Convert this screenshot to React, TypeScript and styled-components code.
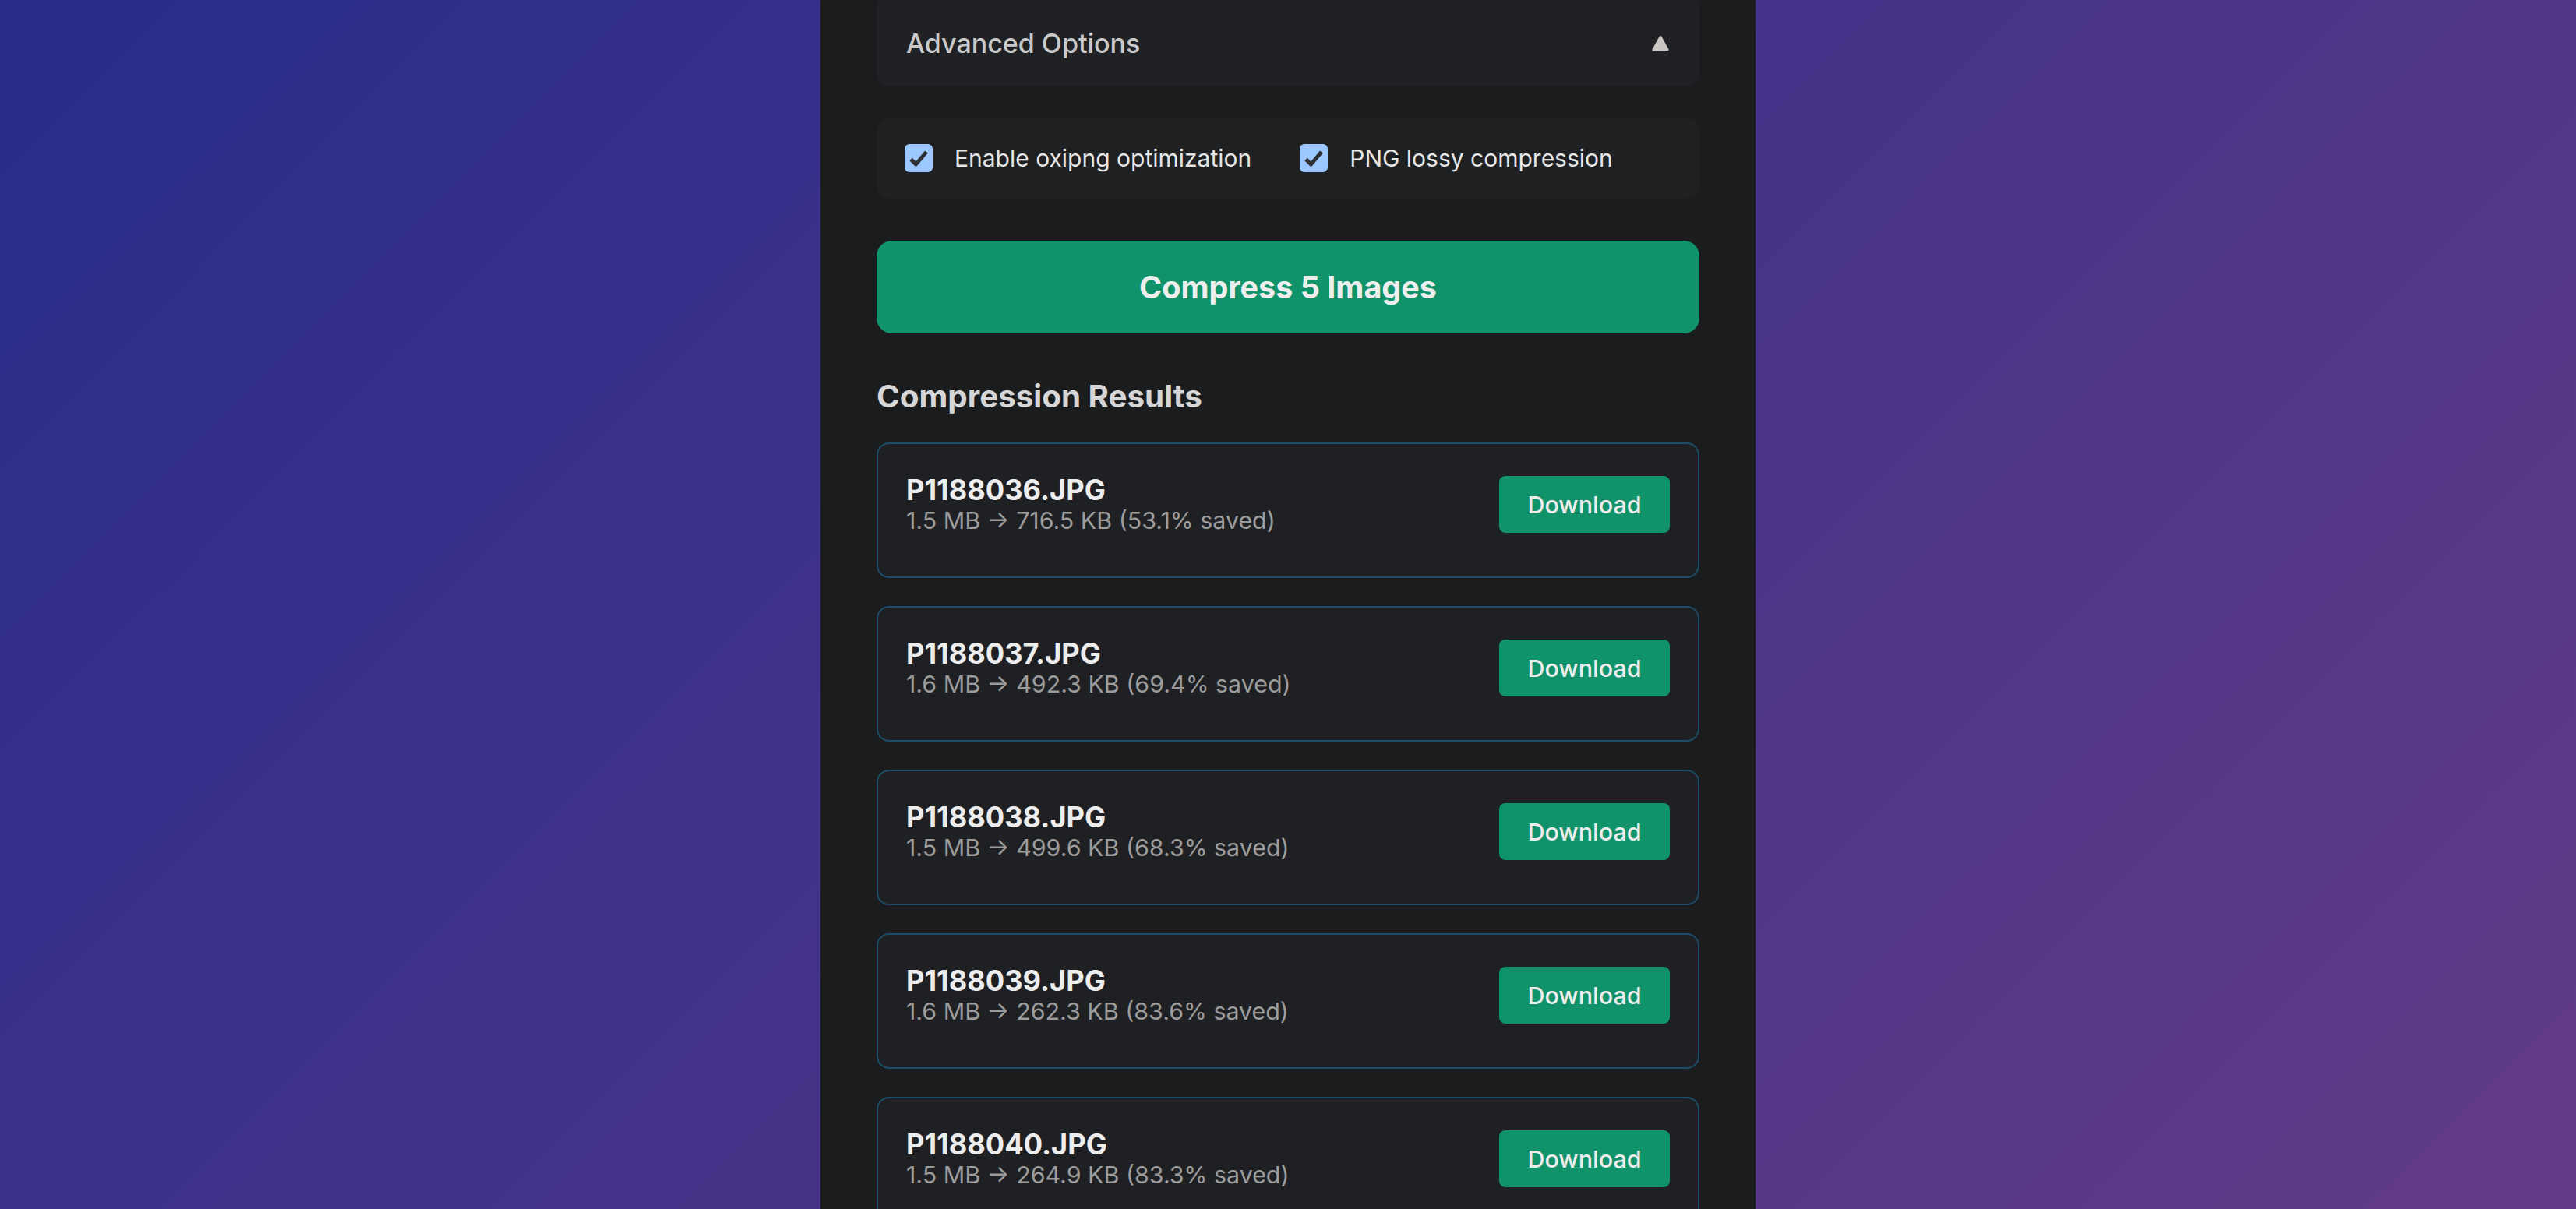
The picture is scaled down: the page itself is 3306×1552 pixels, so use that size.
import React from "react";
import styled, { createGlobalStyle } from "styled-components";

const GlobalStyle = createGlobalStyle`
  html, body {
    margin: 0;
    padding: 0;
  }
  body {
    background: linear-gradient(135deg, #282c8b 0%, #633b86 100%);
    min-height: 100vh;
    font-family: Inter, "Noto Sans", "Liberation Sans", sans-serif;
    overflow: hidden;
  }
`;

const Page = styled.div`
  display: flex;
  justify-content: center;
  min-height: 100vh;
`;

const Panel = styled.main`
  width: 1200px;
  box-sizing: border-box;
  min-height: 100vh;
  background: #1b1c1e;
  padding: 0 72px;
  display: flex;
  flex-direction: column;
`;

const AdvancedCard = styled.div`
  margin-top: -6px;
  height: 116px;
  box-sizing: border-box;
  background: #202124;
  border-radius: 16px;
  padding: 6px 38px 0;
  display: flex;
  align-items: center;
  justify-content: space-between;
`;

const AdvancedTitle = styled.span`
  font-size: 34px;
  font-weight: 500;
  color: #c9c9c9;
`;

const OptionsCard = styled.div`
  margin-top: 41px;
  height: 104px;
  box-sizing: border-box;
  background: #1f2022;
  border-radius: 16px;
  padding: 0 36px;
  display: flex;
  align-items: center;
  gap: 62px;
`;

const OptionLabel = styled.label`
  display: flex;
  align-items: center;
  gap: 28px;
  font-size: 30px;
  color: #e6e6e6;
`;

const CheckBox = styled.span`
  width: 36px;
  height: 36px;
  border-radius: 6px;
  background: #9cc8ff;
  display: flex;
  align-items: center;
  justify-content: center;
`;

const CompressButton = styled.button`
  margin-top: 54px;
  height: 119px;
  border: none;
  border-radius: 20px;
  background: #10936a;
  color: #eeeeee;
  font-family: inherit;
  font-size: 39.5px;
  font-weight: 700;
  cursor: pointer;
`;

const ResultsHeading = styled.h2`
  margin: 56px 0 35px;
  font-size: 40.3px;
  font-weight: 700;
  color: #d6d6d6;
`;

const ResultList = styled.div`
  display: flex;
  flex-direction: column;
  gap: 36px;
`;

const ResultCard = styled.div`
  border: 2px solid #1c4e69;
  border-radius: 16px;
  background: #1f2023;
  padding: 38px 36px 54px;
  display: flex;
  align-items: center;
  justify-content: space-between;
`;

const FileInfo = styled.div`
  display: flex;
  flex-direction: column;
`;

const FileName = styled.span`
  font-size: 36.2px;
  line-height: 42px;
  font-weight: 700;
  color: #ededed;
`;

const FileSizes = styled.span`
  font-size: 30.4px;
  line-height: 36px;
  color: #9c9c9c;
`;

const DownloadButton = styled.button`
  width: 219px;
  height: 73px;
  border: none;
  border-radius: 8px;
  background: #10936a;
  color: #ececec;
  font-family: inherit;
  font-size: 30.5px;
  font-weight: 500;
  cursor: pointer;
`;

const Check = () => (
  <CheckBox>
    <svg width="26" height="24" viewBox="0 0 26 24">
      <path
        d="M3 13.5 L9.5 20 L23 4"
        fill="none"
        stroke="#2d2f33"
        strokeWidth="5"
        strokeLinejoin="round"
      />
    </svg>
  </CheckBox>
);

const Triangle = () => (
  <svg width="24" height="23" viewBox="0 0 24 23">
    <path
      d="M12 2 Q13 2 13.8 3.4 L22.4 19 Q23.2 21 21 21 L3 21 Q0.8 21 1.6 19 L10.2 3.4 Q11 2 12 2 Z"
      fill="#cac6c1"
    />
  </svg>
);

const results = [
  { name: "P1188036.JPG", sizes: "1.5 MB → 716.5 KB (53.1% saved)" },
  { name: "P1188037.JPG", sizes: "1.6 MB → 492.3 KB (69.4% saved)" },
  { name: "P1188038.JPG", sizes: "1.5 MB → 499.6 KB (68.3% saved)" },
  { name: "P1188039.JPG", sizes: "1.6 MB → 262.3 KB (83.6% saved)" },
  { name: "P1188040.JPG", sizes: "1.5 MB → 264.9 KB (83.3% saved)" },
];

export default function App() {
  return (
    <>
      <GlobalStyle />
      <Page>
        <Panel>
          <AdvancedCard>
            <AdvancedTitle>Advanced Options</AdvancedTitle>
            <Triangle />
          </AdvancedCard>
          <OptionsCard>
            <OptionLabel>
              <Check />
              Enable oxipng optimization
            </OptionLabel>
            <OptionLabel>
              <Check />
              PNG lossy compression
            </OptionLabel>
          </OptionsCard>
          <CompressButton>Compress 5 Images</CompressButton>
          <ResultsHeading>Compression Results</ResultsHeading>
          <ResultList>
            {results.map((r) => (
              <ResultCard key={r.name}>
                <FileInfo>
                  <FileName>{r.name}</FileName>
                  <FileSizes>{r.sizes}</FileSizes>
                </FileInfo>
                <DownloadButton>Download</DownloadButton>
              </ResultCard>
            ))}
          </ResultList>
        </Panel>
      </Page>
    </>
  );
}
